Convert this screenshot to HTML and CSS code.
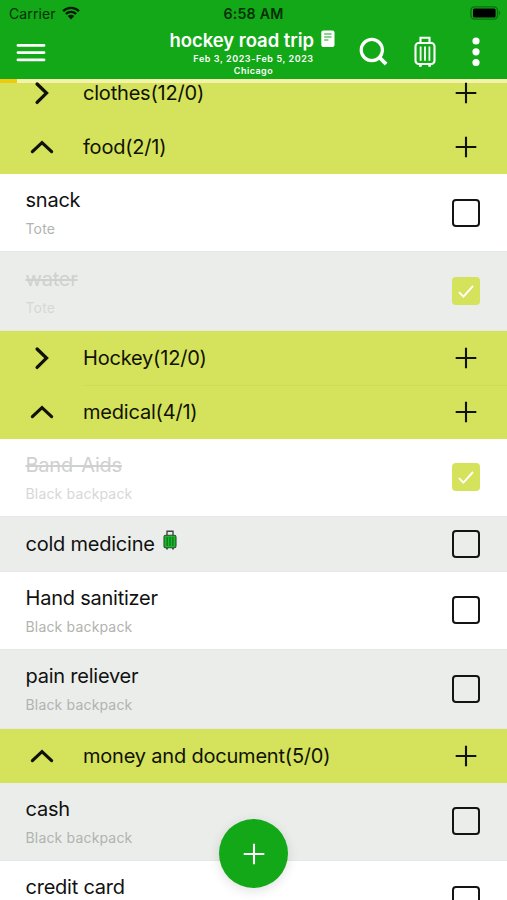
FILE: index.html
```html
<!DOCTYPE html>
<html lang="en">
<head>
<meta charset="utf-8">
<meta name="viewport" content="width=device-width, initial-scale=1">
<title>hockey road trip</title>
<link rel="stylesheet" href="styles.css">
</head>
<body>
<svg class="defs" width="0" height="0" aria-hidden="true">
  <symbol id="plus" viewBox="0 0 22 22"><path d="M11 .7v20.6M.7 11h20.6" fill="none" stroke="currentColor" stroke-width="2.1"/></symbol>
  <symbol id="right" viewBox="0 0 24 24"><path d="M7.1 3l9.4 9.1-9.4 9.3" fill="none" stroke="currentColor" stroke-width="3.3" stroke-linecap="round"/></symbol>
  <symbol id="up" viewBox="0 0 24 24"><path d="M2.4 16.6L12 7.7l9.6 8.9" fill="none" stroke="currentColor" stroke-width="3.2" stroke-linecap="round"/></symbol>
  <symbol id="check" viewBox="0 0 28 28"><path d="M7 15.2l4.4 4.4L21 9" fill="none" stroke="currentColor" stroke-width="1.9"/></symbol>
</svg>
<div class="screen">
  <header class="header">
    <div class="status">
      <div class="carrier"><span>Carrier</span>
        <svg class="wifi" viewBox="0 0 18 14"><path d="M1.1 5.1a11.2 11.2 0 0 1 15.8 0M3.9 8a7.2 7.2 0 0 1 10.2 0" fill="none" stroke="currentColor" stroke-width="2.3"/><path d="M5.8 10a4.5 4.5 0 0 1 6.4 0L9 13.4z" fill="currentColor"/></svg>
      </div>
      <time class="clock">6:58 AM</time>
      <svg class="battery" viewBox="0 0 32 14"><rect x=".9" y=".9" width="26.6" height="12.2" rx="3.6" fill="none" stroke="#0b6f0e" stroke-width="1.4"/><rect x="3" y="2.4" width="22.6" height="9.2" rx="1.5"/><path d="M29 4.6q2.2 2.4 0 4.8z" fill="#0b6f0e"/></svg>
    </div>
    <div class="bar">
      <svg class="burger" viewBox="0 0 30 20"><path d="M1.9 2.4h26.2M1.9 9.6h26.2M1.9 16.9h26.2" stroke="currentColor" stroke-width="2.6" stroke-linecap="round"/></svg>
      <div class="trip">
        <div class="trip-name"><h1>hockey road trip</h1>
          <svg class="note" viewBox="0 0 14 18"><rect x=".3" y=".5" width="13.2" height="16.5" rx="2" fill="currentColor"/><path d="M3.2 4h7.4M3.2 7h7.4M3.2 10h4.2" stroke="#12a817" stroke-width="1.1"/></svg>
        </div>
        <p class="dates">Feb 3, 2023-Feb 5, 2023</p>
        <p class="city">Chicago</p>
      </div>
      <svg class="search" viewBox="0 0 30 30"><circle cx="12.8" cy="13" r="10.6" fill="none" stroke="currentColor" stroke-width="3.2"/><path d="M20.5 20.5l6.6 6.6" stroke="currentColor" stroke-width="3.8"/></svg>
      <svg class="case" viewBox="0 0 22 32"><g fill="none" stroke="currentColor" stroke-width="2.1"><path d="M6.5 7V1.8h9V7"/><rect x="1.5" y="7" width="19" height="21" rx="3.2"/><path d="M6.6 10.5v14.2M11 10.5v14.2M15.4 10.5v14.2" stroke-width="1.8"/><path d="M6.4 28v2.8M15.6 28v2.8" stroke-width="2.6"/></g></svg>
      <svg class="dots" viewBox="0 0 8 30"><g fill="currentColor"><circle cx="4" cy="4" r="3.6"/><circle cx="4" cy="14.8" r="3.6"/><circle cx="4" cy="25.5" r="3.6"/></g></svg>
    </div>
  </header>
  <div class="progress"><div class="progress-fill"></div></div>
  <main class="list">
    <section class="group group-cut"><svg class="chev"><use href="#right"/></svg><h2>clothes(12/0)</h2><svg class="add"><use href="#plus"/></svg></section>
    <section class="group"><svg class="chev"><use href="#up"/></svg><h2>food(2/1)</h2><svg class="add"><use href="#plus"/></svg></section>
    <article class="item"><div class="text"><h3>snack</h3><p>Tote</p></div><span class="box"></span></article>
    <article class="item shade done"><div class="text"><h3>water</h3><p>Tote</p></div><span class="box"><svg><use href="#check"/></svg></span></article>
    <section class="group"><svg class="chev"><use href="#right"/></svg><h2>Hockey(12/0)</h2><svg class="add"><use href="#plus"/></svg></section>
    <section class="group ruled"><svg class="chev"><use href="#up"/></svg><h2>medical(4/1)</h2><svg class="add"><use href="#plus"/></svg></section>
    <article class="item done"><div class="text"><h3>Band-Aids</h3><p>Black backpack</p></div><span class="box"><svg><use href="#check"/></svg></span></article>
    <article class="item shade short"><div class="text"><h3>cold medicine</h3></div>
      <svg class="mini-case" viewBox="0 0 14 20"><path d="M4 5.5V1.3h6v4.2" fill="none" stroke="#444" stroke-width="1.4"/><rect x="1" y="5.2" width="12" height="12.6" rx="1.8" fill="#18bb2a" stroke="#24502a" stroke-width="1.1"/><path d="M4.1 7v9M7 7v9M9.9 7v9" stroke="#125c1b" stroke-width="1"/><path d="M4 18v1.5M10 18v1.5" stroke="#333" stroke-width="1.6"/></svg>
      <span class="box"></span></article>
    <article class="item"><div class="text"><h3>Hand sanitizer</h3><p>Black backpack</p></div><span class="box"></span></article>
    <article class="item shade"><div class="text"><h3>pain reliever</h3><p>Black backpack</p></div><span class="box"></span></article>
    <section class="group"><svg class="chev"><use href="#up"/></svg><h2>money and document(5/0)</h2><svg class="add"><use href="#plus"/></svg></section>
    <article class="item shade"><div class="text"><h3>cash</h3><p>Black backpack</p></div><span class="box"></span></article>
    <article class="item last"><div class="text"><h3>credit card</h3></div><span class="box"></span></article>
  </main>
  <button class="fab" aria-label="Add"><svg><use href="#plus"/></svg></button>
</div>
</body>
</html>
```
FILE: styles.css
```css
* { box-sizing: border-box; }
body { margin: 0; font-family: Inter, "Liberation Sans", sans-serif; color: #111; }
h1, h2, h3, p { margin: 0; font-weight: 400; white-space: nowrap; }
svg { display: block; flex: none; }
.defs { position: absolute; }
.screen { position: relative; width: 507px; height: 900px; overflow: hidden; background: #fff; display: flex; flex-direction: column; }

.header { height: 79px; flex: none; background: #12a817; color: #fff; }
.status { height: 28px; display: grid; grid-template-columns: 1fr auto 1fr; align-items: center; padding: 0 5px 0 9px; color: #052f06; }
.carrier { display: flex; align-items: center; gap: 6px; font-size: 14px; letter-spacing: 0.1px; margin-top: -1px; }
.wifi { width: 18px; height: 14px; margin-top: -1px; color: #021a03; }
.clock { font-size: 14.2px; font-weight: 600; letter-spacing: 0.2px; margin: -1px 4px 0 0; }
.battery { width: 32px; height: 14px; justify-self: end; margin-top: -2px; }
.bar { height: 51px; display: flex; align-items: flex-start; padding-left: 16px; }
.burger { width: 30px; height: 20px; margin-top: 15px; }
.trip { width: 172px; margin-left: 121px; display: flex; flex-direction: column; align-items: center; }
.trip-name { display: flex; gap: 7px; height: 25px; width: 172px; align-items: center; margin-left: 5px; }
.trip-name h1 { font-size: 18.5px; line-height: 25px; font-weight: 600; letter-spacing: -0.05px; }
.note { width: 14px; height: 18px; margin-top: -4px; }
.dates, .city { font-size: 9px; font-weight: 600; line-height: 12px; letter-spacing: 0.57px; margin-left: 1px; }
.city { letter-spacing: 0.45px; }
.search { width: 30px; height: 30px; margin: 9px 0 0 20px; }
.case { width: 22px; height: 32px; margin: 8px 0 0 25px; }
.dots { width: 8px; height: 30px; margin: 9px 0 0 36px; }

.progress { height: 4px; flex: none; background: #f5f2ac; }
.progress-fill { width: 17px; height: 4px; background: #f1c90d; }

.list { flex: none; }
.group { height: 54px; background: #d5e25b; display: flex; align-items: center; padding: 0 30px; color: #101204; }
.group-cut { height: 37px; padding-bottom: 17px; }
.chev { width: 24px; height: 24px; }
.group h2 { flex: 1; margin-left: 29px; font-size: 20px; line-height: 28px; letter-spacing: -0.2px; }
.add { width: 22px; height: 22px; }
.ruled { background: linear-gradient(#cedb56, #cedb56) 83px 0 / 100% 1px no-repeat #d5e25b; }

.item { height: 78.4px; display: flex; align-items: center; padding: 0 27px 0 25.5px; border-bottom: 1px solid #e5e7e6; }
.shade { background: #ebedea; }
.short { height: 54.6px; }
.text h3 { font-size: 20px; line-height: 28px; letter-spacing: -0.23px; }
.text p { font-size: 14px; line-height: 20px; margin-top: 5px; color: #b1b3b1; letter-spacing: 0.17px; }
.box { width: 28px; height: 28px; margin-left: auto; border: 2px solid #141414; border-radius: 4px; flex: none; }
.done .text { color: #cfd1cf; }
.done h3 { text-decoration: line-through; text-decoration-thickness: 1.5px; }
.done p { color: #d6d8d6; }
.done .box { border: 0; background: #d5e25b; color: #fff; }
.done .box svg { width: 28px; height: 28px; }
.mini-case { width: 14px; height: 20px; margin: -7px 0 0 8px; }
.last { align-items: flex-start; }
.last .text { margin-top: 12px; }
.last .box { margin-top: 25px; }

.fab { position: absolute; left: 219px; top: 819px; width: 69px; height: 69px; border: 0; padding: 0; border-radius: 50%; background: #12a817; color: #fff; display: grid; place-items: center; box-shadow: 0 3px 12px rgba(0, 0, 0, 0.12); }
.fab svg { width: 22px; height: 22px; }
```
